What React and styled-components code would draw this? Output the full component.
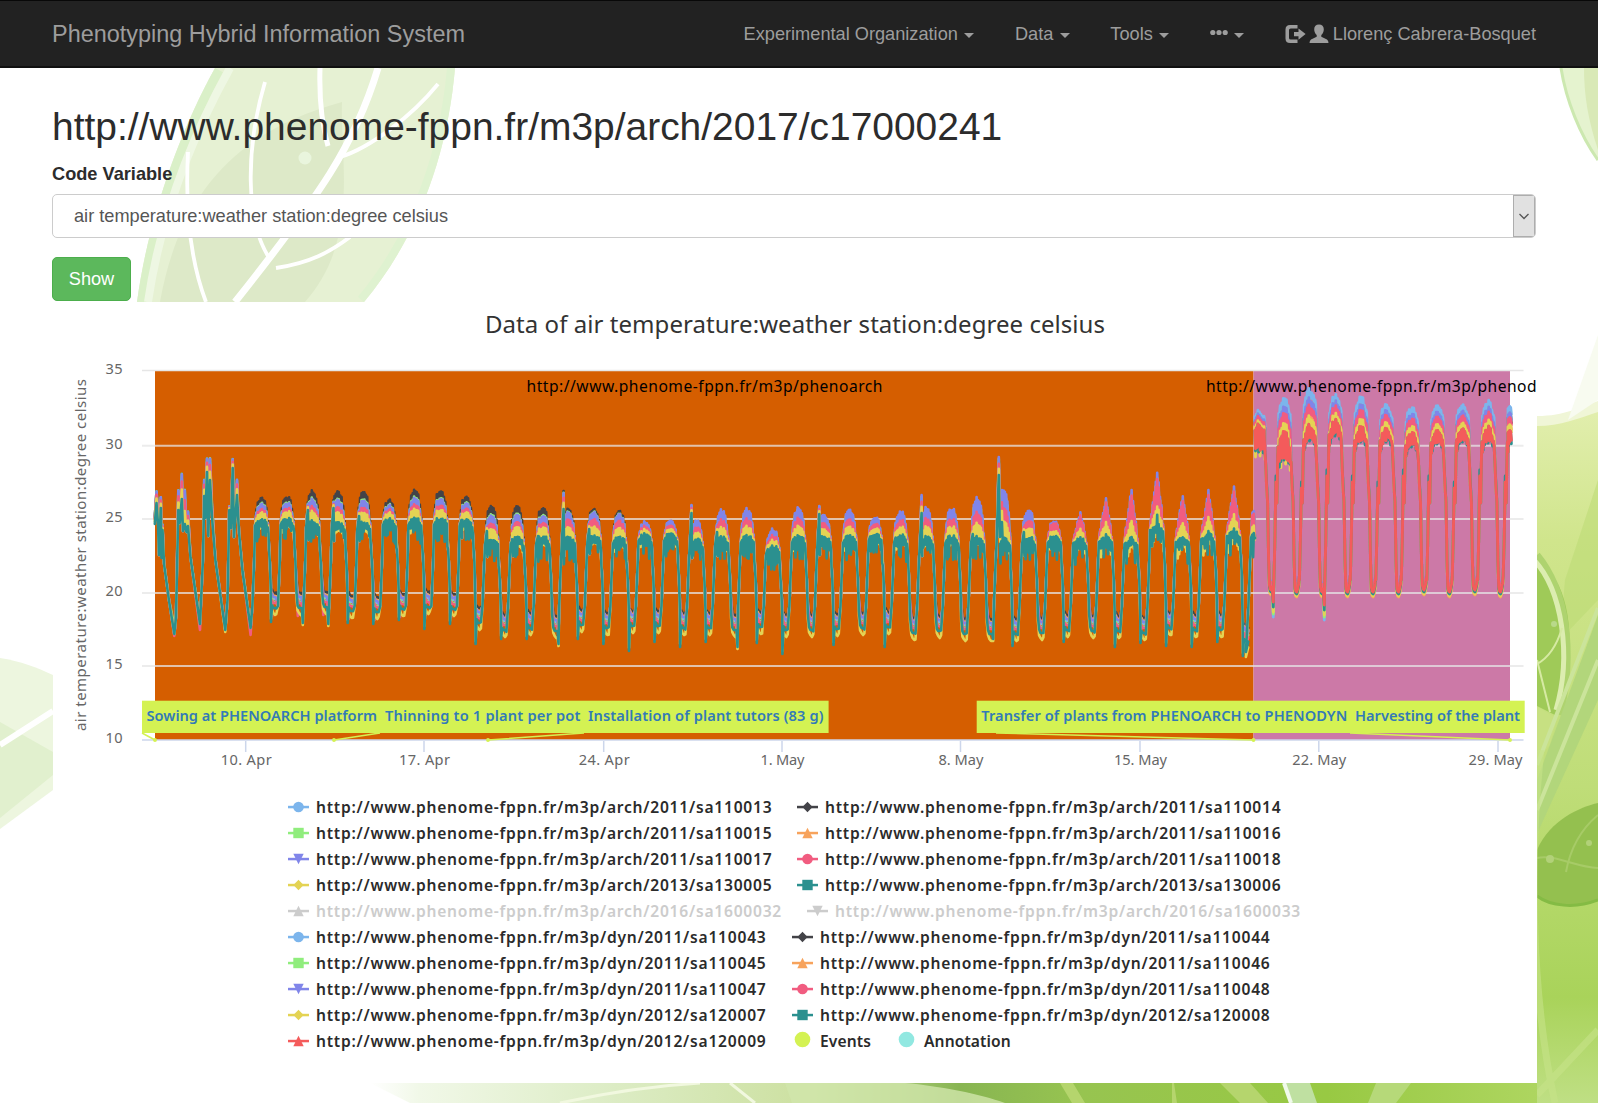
import React from "react";
import styled, { createGlobalStyle } from "styled-components";

const GlobalStyle = createGlobalStyle`
  * { box-sizing: border-box; }
  body {
    margin: 0;
    background: #fff;
    color: #333;
    font-family: "Liberation Sans", Arial, sans-serif;
    font-size: 18.2px;
    overflow: hidden;
  }
`;

const CHART_FONT = '"Noto Sans", "Open Sans", sans-serif';

const Page = styled.div`
  position: relative;
  height: 1103px;
  overflow: hidden;
  display: flex;
  flex-direction: column;
`;

const Backdrop = styled.svg`
  position: absolute;
  inset: 0;
  z-index: -1;
`;

const Navbar = styled.nav`
  height: 68px;
  flex: none;
  display: flex;
  align-items: center;
  justify-content: space-between;
  padding: 1px 62px 0 52px;
  background: #222;
  border-top: 1px solid #080808;
  border-bottom: 2px solid #101010;
  color: #9d9d9d;
`;

const Brand = styled.span`
  font-size: 23.45px;
  line-height: 30px;
`;

const NavList = styled.ul`
  display: flex;
  gap: 40.5px;
  margin: 0;
  padding: 0;
  list-style: none;
`;

const NavItem = styled.li`
  display: flex;
  align-items: center;
  gap: ${(p) => p.$gap || 6.5}px;
  white-space: nowrap;
  line-height: 26px;
`;

const Caret = styled.i`
  margin-top: 3px;
  border: 5.5px solid transparent;
  border-top-color: currentColor;
  border-bottom: 0;
`;

const Main = styled.main`
  display: flex;
  flex-direction: column;
  align-items: flex-start;
  padding: 35px 62px 0 52px;
`;

const Title = styled.h1`
  margin: 0;
  font-size: 38.95px;
  font-weight: 400;
  line-height: 48px;
  color: #2c2c2c;
`;

const Label = styled.label`
  margin-top: 10px;
  font-weight: 700;
  line-height: 26px;
  color: #2c2c2c;
`;

const Select = styled.div`
  align-self: stretch;
  height: 44px;
  margin-top: 7px;
  display: flex;
  align-items: stretch;
  justify-content: space-between;
  background: #fff;
  border: 1.5px solid #ccc;
  border-radius: 5px;
  overflow: hidden;
  color: #555;
`;

const SelectValue = styled.span`
  padding-left: 21px;
  line-height: 43px;
`;

const SelectArrow = styled.span`
  width: 22px;
  display: flex;
  align-items: center;
  justify-content: center;
  background: #e1e1e1;
  border: 1px solid #adadad;
`;

const Button = styled.button`
  width: 79px;
  height: 44px;
  margin-top: 19px;
  padding: 0;
  border: 1px solid #4cae4c;
  border-radius: 5px;
  background: #5cb85c;
  color: #fff;
  font: inherit;
`;

const Panel = styled.section`
  width: 1484px;
  height: 781px;
  margin: 1px 0 0 1px;
  background: #fff;
`;

const Plot = styled.svg`
  display: block;
  font-family: ${CHART_FONT};
`;

const Legend = styled.div`
  padding-left: 235px;
`;

const LegendRow = styled.div`
  display: flex;
  align-items: center;
  gap: 26px;
  height: 26.04px;
`;

const LegendItem = styled.div`
  display: flex;
  align-items: center;
  gap: 7px;
  color: ${(p) => (p.$off ? "#ccc" : "#2b2b2b")};
`;

const LegendName = styled.span`
  width: ${(p) => p.$w}px;
  font: 600 15.6px/26px ${CHART_FONT};
  letter-spacing: ${(p) => (p.$short ? 0.1 : 0.76)}px;
  white-space: nowrap;
`;

const C = {
  blue: "#7cb5ec",
  black: "#434348",
  green: "#90ed7d",
  orange: "#f7a35c",
  violet: "#8085e9",
  pink: "#f15c80",
  yellow: "#e4d354",
  teal: "#2b908f",
  red: "#f45b5b",
  lime: "#d4f253",
  aqua: "#91e8e1",
  off: "#ccc",
};

/* Repeatable noise in 0..1 */
const noise = (a, b, c) => {
  const v = Math.sin(a * 127.1 + b * 311.7 + c * 74.7) * 43758.5453;
  return v - Math.floor(v);
};

/* Days in the greenhouse: [highest y, base y, night y, dip (1 start, 0 end, 2 none), left spike y] */
const ARCH = [
  [496, 518, 607, 1, 0], [495, 517, 607, 0, 0], [490, 520, 606, 0, 502], [490, 521, 610, 1, 500],
  [490, 521, 611, 1, 508], [499, 518, 608, 1, 0], [489, 517, 606, 1, 0], [489, 517, 608, 1, 0],
  [495, 518, 622, 1, 512], [503, 537, 629, 1, 523], [505, 536, 627, 1, 532], [506, 535, 630, 0, 528],
  [508, 536, 624, 1, 491], [507, 534, 627, 1, 521], [510, 536, 625, 1, 0], [521, 533, 625, 1, 0],
  [520, 533, 627, 1, 0], [519, 538, 627, 1, 505], [509, 536, 629, 0, 524], [508, 535, 626, 1, 0],
  [528, 545, 629, 1, 0], [507, 535, 629, 2, 0], [513, 535, 628, 1, 506], [509, 535, 627, 2, 0],
  [516, 533, 626, 1, 0], [510, 534, 632, 2, 0], [507, 536, 630, 2, 495], [507, 535, 633, 2, 0],
  [496, 535, 633, 0, 526], [490, 537, 633, 1, 457], [508, 536, 632, 2, 524], [520, 535, 629, 1, 0],
  [510, 535, 630, 2, 0], [498, 534, 630, 1, 0], [489, 536, 632, 1, 0], [471, 522, 627, 1, 0],
  [493, 534, 629, 1, 0], [490, 531, 629, 1, 0], [486, 528, 640, 1, 0], [508, 530, 0, 0, 0],
];
const DIP = [622, 624, 625, 623, 624, 620, 629, 624, 644, 639, 639, 645, 639, 644, 651, 642, 647, 642, 648, 643, 654, 634, 645, 637, 647, 637, 636, 638, 640, 646, 637, 642, 638, 647, 643, 646, 647, 642, 656];

const archSeries = [
  { c: C.blue, f: 0.7, n: -9 },
  { c: C.black, f: 1, n: -15 },
  { c: C.green, f: 0.9, n: -6 },
  { c: C.orange, f: 0.65, n: -12 },
  { c: C.violet, f: 0.88, n: -11 },
  { c: C.pink, f: 0.62, n: -5 },
  { c: C.yellow, f: 0.34, n: 5 },
  { c: C.teal, f: 0, n: 0 },
];
const EARLY = [0.68, 1, 0.76, 0.45, 0.72, 0.48, 0.32, 0];

const SHAPE = [0.42, 0.16, 0.08, 0, 0.02, 0.06, 0.16, 0.38, 0.8];
const SHARP = [0.75, 0.55, 0.35, 0.14, 0, 0.2, 0.42, 0.6, 0.95];

function archPath(s, k) {
  const up = 1 - Math.min(s.f, 0.9);
  const p = [];
  const at = (x, y) => p.push(x.toFixed(1) + "," + y.toFixed(1));
  const shift = (k - 4) * 0.25;
  at(154.8, 516 + up * 8);
  at(156.5, 490 + up * 13);
  at(158, 510 + up * 14);
  at(159, 555);
  at(160.8, 496 + up * 12);
  at(161.5, 548 + up * 10);
  at(162.5, 524 + up * 6);
  at(164, 563 + shift);
  at(169, 600 + shift);
  at(174.3, (k === 5 ? 636 : 634) - (k === 2 ? 8 : 0));
  at(176, 617);
  at(178.3, 488 + up * 22);
  at(179.8, 523);
  at(181.8, 471 + up * 28);
  at(183, 531);
  at(184.8, 486 + up * 38);
  at(186.5, 532);
  at(188, 510 + up * 16);
  at(190.5, 557 + shift);
  at(200, k === 5 ? 630 : 624);
  at(203, 558);
  at(204.2, 478 + up * 18);
  at(205.3, 518);
  at(207, 457 + up * 15);
  at(208.3, 536);
  at(210, (k === 1 ? 459 : 456) + up * 24);
  at(212, 505 + up * 12);
  at(215.5, 560 + shift * 2);
  at(225.3, k === 6 ? 632 : 630);
  at(227.5, 600);
  at(229.3, 506 + up * 4);
  at(231, 528);
  at(232.7, 458 + up * 10);
  at(234, 537);
  at(237, 478 + up * 17);
  at(239, 532);
  at(242.5, 570 + shift * 2);
  at(250.6, k === 5 ? 635 : 628);
  ARCH.forEach((d, i) => {
    const x0 = i < 31 ? 253 + i * 25.57 : 1045.7 + (i - 31) * 25.6 - (i === 39 ? 1.5 : 0);
    const [top, base, night, dip, spike] = d;
    const range = base - top;
    let f = i < 12 ? EARLY[k] : s.f;
    if (i > 14 && k === 1) f = 0.8;
    if (i > 14 && k === 4) f = 1;
    if (i > 30 && k === 5) f = 0.88;
    const peak = base - range * f;
    at(x0 - 0.6, 606);
    at(x0 + 1.2, 560);
    at(x0 + 2, base + 8);
    if (spike) {
      if (i === 29) {
        at(x0 + 4.3, spike + (1 - f) * 18);
        at(x0 + 5.4, base);
        at(x0 + 7.4, 490 + (1 - f) * 32);
        at(x0 + 8.4, base + 8);
      } else {
        const tall = i === 12 || i === 26;
        at(x0 + 3.8, spike + (1 - f) * (tall ? 18 : 8));
        at(x0 + 4.4, base + 20);
      }
    }
    const last = i === ARCH.length - 1;
    const steps = last ? 2 : 9;
    const curve = i >= 32 && i < 39 ? SHARP : SHAPE;
    for (let j = 0; j < steps; j++) {
      const shoulder = last ? 4 - j * 3 : curve[j] * (8 + range * f * 0.9);
      const x = x0 + (i === 29 ? 5.4 : 3.4) + j * (i === 29 ? 1.25 : 1.42);
      const sharpTeal = k === 7 && i === 35 && j === 4 ? -9 : 0;
      at(x, peak + shoulder + sharpTeal + noise(i, j, 1) * 3.5);
      const deep = noise(i, j, 2);
      const jag = k === 7 ? 7 + deep * deep * 18 : Math.min(9 + range * 0.34, 24);
      at(x + 0.7, peak + shoulder + jag);
    }
    if (last) {
      at(x0 + 6, base + 8);
      return;
    }
    at(x0 + 16, base + 26 + (1 - f) * 6);
    at(x0 + 16.8, base + 44);
    at(x0 + 17.8, night - 16 + s.n);
    if (dip === 1) at(x0 + 18, k >= 6 ? DIP[i] - (k === 6 ? 3 : 0) : k === 5 ? night + 5 : night + s.n);
    if (i < 8 && k === 5) at(x0 + 19.2, night + 9);
    at(x0 + 19, night + s.n - 3 + noise(i, k, 4) * 2);
    at(x0 + 20.4, night + s.n + 1);
    at(x0 + 22, night + s.n + (k === 6 ? 3 : 1));
    at(x0 + 23.3, night + s.n + noise(i, k, 6) * 3);
    if (dip === 0) at(x0 + 24.2, DIP[i] + (k === 6 ? 1 : k === 7 ? -1 : -10));
    if (i === 38) at(x0 + 21, 652 + s.n);
  });
  return p.join(" ");
}

/* Days in the second platform: [highest y, red top y, night y, dip y] */
const DYN = [
  [410, 425, 590, 617], [397, 433, 592, 596], [387, 426, 592, 620], [394, 421, 592, 597],
  [395, 427, 592, 598], [401, 427, 592, 597], [405, 432, 590, 595], [402, 429, 592, 598],
  [401, 427, 590, 595], [400, 428, 592, 601], [402, 428, 0, 0],
];

const dynSeries = [
  { c: C.blue, f: 1, n: -4 },
  { c: C.black, f: 0.65, n: -4 },
  { c: C.green, f: 0.75, n: 2 },
  { c: C.orange, f: 0.4, n: 4 },
  { c: C.violet, f: 0.76, n: -7 },
  { c: C.pink, f: 0.58, n: -6 },
  { c: C.yellow, f: 0.3, n: 3 },
  { c: C.teal, f: 0.06, n: 1 },
  { c: C.red, f: 0.08, n: -1 },
];

function dynPath(s, k) {
  const p = [];
  const at = (x, y) => p.push(x.toFixed(1) + "," + y.toFixed(1));
  DYN.forEach(([top, red, night, dip], i) => {
    const x0 = 1250 + i * 25.48;
    const peak = red - (red - top) * s.f;
    const last = i === DYN.length - 1;
    const early = i < 2;
    if (i > 0) {
      at(x0 - 1.6, night ? 580 : 575);
      at(x0 - 0.6, 540);
      at(x0 + 0.4, 476 + (i % 3) * 6 + (k === 7 ? -6 : 0));
      at(x0 + 1.4, 503);
      at(x0 + 2.2, 455);
      at(x0 + 2.6, red + 14);
      at(x0 + 3.2, red + 24);
    }
    const steps = last ? 4 : 8;
    const first = i === 0 ? 1 : 0;
    for (let j = first; j < steps; j++) {
      const bell = last ? 6 - j * 1.5 : Math.abs(j - 3.6) ** 2 * (i === 0 ? 0.3 : 1.1);
      const x = x0 + 3.2 + j * (last ? 0.9 : 1.55);
      let bottom = peak + 11;
      if (k === 7) bottom = red + 15 + (early ? 12 : 0) - (j % 3) * 2;
      if (k === 6 && early) bottom = red + (j % 3 === 1 ? 31 : 20);
      if (k === 8) bottom = red + (early ? 21 : 9) + noise(i, j, 3) * 5;
      at(x, peak + bell + noise(i, j, 9) * 5);
      at(x + 0.7, Math.max(bottom, peak + 5) + bell * 0.5);
    }
    if (last) return;
    at(x0 + 15.6, 462);
    at(x0 + 16.6, 487 + (k === 7 ? -4 : 0));
    at(x0 + 17.6, 502);
    at(x0 + 18.6, 560);
    at(x0 + 19.4, night + s.n - 4);
    at(x0 + 20.2, night + s.n);
    at(x0 + 21.2, night + s.n + 1);
    const deep = i === 0 || i === 2;
    if (deep) {
      at(x0 + 22.2, night + s.n - 2);
      at(x0 + 23.3, dip - (k === 0 ? 0 : k === 2 ? 3 : k === 6 ? 5 : k === 7 ? 10 : 15));
      at(x0 + 24.2, 565);
    } else {
      at(x0 + 22.2, night + s.n - 2);
      at(x0 + 23.2, night + s.n - 7);
      at(x0 + 24, 575);
    }
  });
  return p.join(" ");
}

const GRID = [[35, 370.5], [30, 445.7], [25, 519], [20, 593], [15, 666], [10, 740]];
const TICKS = [
  ["10. Apr", 245.7, 51], ["17. Apr", 424, 51], ["24. Apr", 603.7, 51], ["1. May", 782, 44],
  ["8. May", 960.5, 45], ["15. May", 1140, 53], ["22. May", 1318.8, 54], ["29. May", 1498, 54],
];
const FLAGS = [
  ["Sowing at PHENOARCH platform", 146.5, 230.5],
  ["Thinning to 1 plant per pot", 385, 195.5],
  ["Installation of plant tutors (83 g)", 588, 235.5],
  ["Transfer of plants from PHENOARCH to PHENODYN", 981.3, 366],
  ["Harvesting of the plant", 1355, 165],
];

function Chart() {
  return (
    <Plot width="1484" height="492" viewBox="53 302 1484 492">
      <text x="485" y="333" fontSize="24" fill="#333" textLength="620">Data of air temperature:weather station:degree celsius</text>
      <text transform="translate(86 731) rotate(-90)" fontSize="15" fill="#666" textLength="352">air temperature:weather station:degree celsius</text>
      <rect x="155" y="371" width="1098.5" height="369" fill="#d55e00" />
      <rect x="1253.5" y="371" width="256.5" height="369" fill="#cc79a7" />
      {GRID.map(([v, y]) => (
        <g key={v}>
          <line x1="142" x2="1523.5" y1={y} y2={y} stroke={v === 10 ? "#ccd6eb" : "#e6e6e6"} strokeOpacity={v === 10 || v === 35 ? 1 : 0.75} strokeWidth={v === 10 || v === 35 ? 1.3 : 2} />
          <text x="122.5" y={y + 3.3} textAnchor="end" fontSize="14.6" fill="#666" textLength="17">{v}</text>
        </g>
      ))}
      {TICKS.map(([t, x, w]) => (
        <g key={t}>
          <line x1={x} x2={x} y1="741" y2="752" stroke="#ccd6eb" strokeWidth="1.5" />
          <text x={t === "29. May" ? 1468.5 : x + 0.5 - w / 2} y="765" fontSize="14.6" fill="#666" textLength={w}>{t}</text>
        </g>
      ))}
      <text x="526.5" y="391.7" fontSize="15.6" fill="#000" textLength="356">http://www.phenome-fppn.fr/m3p/phenoarch</text>
      <text x="1206" y="391.7" fontSize="15.6" fill="#000" textLength="330.5">http://www.phenome-fppn.fr/m3p/phenod</text>
      <g fill="none" strokeWidth="2.6" strokeLinejoin="round" strokeLinecap="round">
        {archSeries.map((s, k) => <polyline key={k} points={archPath(s, k)} stroke={s.c} />)}
        {dynSeries.map((s, k) => <polyline key={k} points={dynPath(s, k)} stroke={s.c} strokeWidth={k === 8 ? 2.9 : 2.8} />)}
      </g>
      <g stroke={C.lime} strokeWidth="1.5" fill={C.lime}>
        <path d="M142 733L155 740M380 733L334 740M584 733L488 740M996 733L1253.5 740M1350 733L1510 740" />
        {[155, 334, 488, 1253.5, 1510].map((x) => <circle key={x} cx={x} cy="740" r="1.2" />)}
      </g>
      <rect x="142" y="700.7" width="686.6" height="32.3" fill={C.lime} />
      <rect x="976.7" y="700.7" width="548" height="32.3" fill={C.lime} />
      {FLAGS.map(([t, x, w]) => (
        <text key={t} x={x} y="721.3" fontSize="14.6" fontWeight="600" fill="#337ab7" textLength={w}>{t}</text>
      ))}
    </Plot>
  );
}

function Marker({ kind, color }) {
  if (kind === "dot") {
    return <svg width="21" height="22" viewBox="0 -1 21 22"><circle cx="10.5" cy="8.5" r="7.8" fill={color} /></svg>;
  }
  return (
    <svg width="21" height="16" viewBox="0 0 21 16" fill={color}>
      <rect y="6.8" width="21" height="2.5" />
      {kind === "circle" && <circle cx="10.5" cy="8" r="5.3" />}
      {kind === "square" && <rect x="5.3" y="2.8" width="10.4" height="10.4" />}
      {kind === "diamond" && <path d="M10.5 2.7L15.6 8l-5.1 5.3L5.4 8z" />}
      {kind === "up" && <path d="M10.5 2.8l5.2 10.4H5.3z" />}
      {kind === "down" && <path d="M5.3 2.8h10.4l-5.2 10.4z" />}
    </svg>
  );
}

const URL_BASE = "http://www.phenome-fppn.fr/m3p/";
const LEGEND = [
  [["arch/2011/sa110013", "circle", C.blue], ["arch/2011/sa110014", "diamond", C.black]],
  [["arch/2011/sa110015", "square", C.green], ["arch/2011/sa110016", "up", C.orange]],
  [["arch/2011/sa110017", "down", C.violet], ["arch/2011/sa110018", "circle", C.pink]],
  [["arch/2013/sa130005", "diamond", C.yellow], ["arch/2013/sa130006", "square", C.teal]],
  [["arch/2016/sa1600032", "up", C.off], ["arch/2016/sa1600033", "down", C.off]],
  [["dyn/2011/sa110043", "circle", C.blue], ["dyn/2011/sa110044", "diamond", C.black]],
  [["dyn/2011/sa110045", "square", C.green], ["dyn/2011/sa110046", "up", C.orange]],
  [["dyn/2011/sa110047", "down", C.violet], ["dyn/2011/sa110048", "circle", C.pink]],
  [["dyn/2012/sa120007", "diamond", C.yellow], ["dyn/2012/sa120008", "square", C.teal]],
  [["dyn/2012/sa120009", "up", C.red], ["Events", "dot", C.lime, 50], ["Annotation", "dot", C.aqua, 87]],
];

const nameWidth = (name) => (name.startsWith("dyn") ? 450 : name.length > 18 ? 465 : 455);

function LeafBackdrop() {
  return (
    <Backdrop width="1598" height="1103" viewBox="0 0 1598 1103">
      <defs>
        <linearGradient id="side" x1="0" y1="400" x2="0" y2="1103" gradientUnits="userSpaceOnUse">
          <stop offset="0" stopColor="#e3efb0" />
          <stop offset=".2" stopColor="#d0e58c" />
          <stop offset=".55" stopColor="#bfdd78" />
          <stop offset=".85" stopColor="#a9d35a" />
          <stop offset="1" stopColor="#bfdf84" />
        </linearGradient>
        <linearGradient id="foot" x1="370" y1="0" x2="1598" y2="0" gradientUnits="userSpaceOnUse">
          <stop offset="0" stopColor="#fff" />
          <stop offset=".04" stopColor="#f1f8e8" />
          <stop offset=".2" stopColor="#dcecc4" />
          <stop offset=".36" stopColor="#cce0a0" />
          <stop offset=".48" stopColor="#88b552" />
          <stop offset=".58" stopColor="#97c450" />
          <stop offset=".78" stopColor="#98c943" />
          <stop offset="1" stopColor="#b4d968" />
        </linearGradient>
        <clipPath id="leaf"><path d="M215 68C178 135 148 220 137 302H364C420 235 448 150 455 68Z" /></clipPath>
      </defs>
      <g clipPath="url(#leaf)">
        <rect x="130" y="68" width="330" height="234" fill="#e6f1d3" />
        <path d="M215 68C178 135 148 220 137 302" stroke="#daf0c8" strokeWidth="18" fill="none" />
        <path d="M455 68C448 150 420 235 364 302" stroke="#dff2d0" strokeWidth="16" fill="none" />
        <path d="M230 68C190 140 160 220 148 302" stroke="#eef7e3" strokeWidth="8" fill="none" />
        <path d="M342 102C240 130 180 190 160 302H305C360 240 340 160 342 102Z" fill="#dde9c8" />
        <path d="M378 68C355 145 320 195 235 302" stroke="#fff" strokeWidth="7" fill="none" />
        <path d="M320 68C319 100 322 125 328 146" stroke="#fff" strokeWidth="5" fill="none" />
        <path d="M340 157C370 148 412 116 438 84M265 82C245 150 246 220 268 256M276 268C310 263 330 252 350 237M188 152C185 210 190 260 206 302" stroke="#fff" strokeWidth="3.8" fill="none" />
        <circle cx="305" cy="158" r="6.5" fill="#e9f5dd" />
      </g>
      <path d="M1561 68C1566 100 1580 135 1598 160V68Z" fill="#e5f3cf" />
      <path d="M1561 68C1566 100 1580 135 1598 160" stroke="#cce8b0" strokeWidth="3" fill="none" />
      <path d="M1598 68V150C1588 120 1584 95 1584 68Z" fill="#d9e9b7" />
      <path d="M0 658C20 661 38 668 53 675V790L0 829Z" fill="#edf6df" />
      <path d="M0 722L53 752V775L0 818Z" fill="#e1f0ce" />
      <path d="M0 745L53 711" stroke="#fff" strokeWidth="6" />
      <path d="M1530 426C1560 423 1580 418 1598 410V1103H1530Z" fill="url(#side)" />
      <path d="M1537 416C1565 416 1580 407 1598 401V412C1580 418 1560 426 1537 426Z" fill="#f0f6d7" />
      <path d="M1568 420L1598 335V400Z" fill="#f8fbf0" />
      <path d="M1598 480V600L1560 640L1565 580Z" fill="#b9da72" opacity=".5" />
      <path d="M1537 560C1560 575 1576 610 1567 680L1557 716L1537 706Z" fill="#9fca58" />
      <path d="M1537 555C1566 590 1575 650 1560 715" stroke="#aed36f" strokeWidth="7" fill="none" />
      <path d="M1534 560C1562 590 1572 655 1556 710" stroke="#dcedb0" strokeWidth="5" fill="none" />
      <path d="M1537 707L1557 718L1550 745L1537 760Z" fill="#c7e082" />
      <path d="M1537 664C1548 658 1557 645 1562 628M1537 660L1550 712" stroke="#d6eaa3" strokeWidth="2" fill="none" />
      <circle cx="1554" cy="624" r="3" fill="#b9d98a" />
      <path d="M1598 615L1537 780V834L1598 700Z" fill="#b2d67b" />
      <path d="M1598 608L1537 765M1598 660L1537 810" stroke="#cbe49b" strokeWidth="4" />
      <path d="M1537 850C1550 820 1580 807 1598 803V900C1575 909 1550 906 1537 896Z" fill="#94c04f" />
      <path d="M1537 858C1555 854 1575 867 1598 868M1566 872C1570 850 1580 830 1598 815" stroke="#a7cb67" strokeWidth="2" fill="none" />
      <path d="M1537 896C1550 906 1575 909 1598 900" stroke="#84bb44" strokeWidth="3" fill="none" />
      <circle cx="1550" cy="859" r="4" fill="#b2d179" /><circle cx="1589" cy="843" r="3" fill="#b2d179" />
      <path d="M1541 750C1530 850 1530 990 1555 1103M1598 1030L1537 1095" stroke="#c6e288" strokeWidth="7" fill="none" opacity=".6" />
      <path d="M370 1083H1537V1103H410Z" fill="url(#foot)" />
      <path d="M560 1103C610 1092 650 1086 700 1083M730 1083L755 1103" stroke="#f1f8df" strokeWidth="3" fill="none" />
      <path d="M785 1083H905C940 1086 980 1094 1005 1103H792Z" fill="#d1e6ab" opacity=".8" />
      <path d="M1060 1083L1072 1103H1085L1073 1083ZM1172 1083V1103H1177L1174 1083ZM1220 1083L1240 1103H1268L1250 1083Z" fill="#b5d56d" />
      <path d="M1283 1083H1310L1317 1103H1290Z" fill="#bfe0a1" />
      <path d="M1284 1083L1291 1103" stroke="#f1faeb" strokeWidth="4" />
      <path d="M1376 1083L1368 1103H1396L1411 1083Z" fill="#b6d979" />
    </Backdrop>
  );
}

export default function App() {
  return (
    <Page>
      <GlobalStyle />
      <LeafBackdrop />
      <Navbar>
        <Brand>Phenotyping Hybrid Information System</Brand>
        <NavList>
          <NavItem>Experimental Organization<Caret /></NavItem>
          <NavItem>Data<Caret /></NavItem>
          <NavItem>Tools<Caret /></NavItem>
          <NavItem>
            <svg width="18" height="18" viewBox="0 0 18 18" fill="currentColor">
              <circle cx="2.8" cy="7.5" r="2.6" /><circle cx="9" cy="7.5" r="2.6" /><circle cx="15.2" cy="7.5" r="2.6" />
            </svg>
            <Caret />
          </NavItem>
          <NavItem $gap={3.5}>
            <svg width="21" height="20" viewBox="0 0 21 20" fill="currentColor">
              <path d="M12.5 1H5Q.5 1 .5 5.5v9Q.5 19 5 19h7.5v-3.5H5.8Q4 15.500 4 14V6q0-1.600 1.800-1.600h6.700z" />
              <path d="M13.500 4.500L20.600 10l-7.100 5.700v-3.500H9V8h4.500z" />
            </svg>
            <svg width="20" height="20" viewBox="0 0 20 20" fill="currentColor">
              <path d="M10 .5c-3 0-4.800 2-4.800 4.800 0 2.400 1 4.500 2.500 5.700v1.800L2 15.500Q.5 16.500.5 19h19q0-2.500-1.500-3.500l-5.700-2.700V11c1.500-1.200 2.500-3.300 2.500-5.700C14.800 2.500 13 .5 10 .5z" />
            </svg>
            <span>Llorenç Cabrera-Bosquet</span>
          </NavItem>
        </NavList>
      </Navbar>
      <Main>
        <Title>http://www.phenome-fppn.fr/m3p/arch/2017/c17000241</Title>
        <Label>Code Variable</Label>
        <Select>
          <SelectValue>air temperature:weather station:degree celsius</SelectValue>
          <SelectArrow>
            <svg width="10" height="7" viewBox="0 0 10 7" fill="none" stroke="#555" strokeWidth="1.3"><path d="M.5 1L5 5.500 9.500 1" /></svg>
          </SelectArrow>
        </Select>
        <Button>Show</Button>
        <Panel>
          <Chart />
          <Legend>
            {LEGEND.map((row, i) => (
              <LegendRow key={i}>
                {row.map(([name, kind, color, w]) => (
                  <LegendItem key={name} $off={color === C.off}>
                    <Marker kind={kind} color={color} />
                    <LegendName $w={w || nameWidth(name)} $short={!!w}>{w ? name : URL_BASE + name}</LegendName>
                  </LegendItem>
                ))}
              </LegendRow>
            ))}
          </Legend>
        </Panel>
      </Main>
    </Page>
  );
}
